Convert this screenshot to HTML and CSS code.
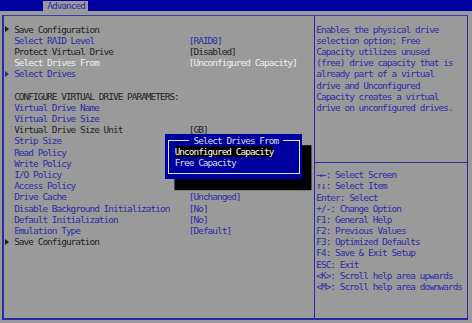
FILE: index.html
```html
<!DOCTYPE html>
<html>
<head>
<meta charset="utf-8">
<link rel="stylesheet" href="styles.css">
</head>
<body>
<div class="bar"><span class="tab">Advanced</span></div>
<div class="frame">
  <div class="main">
    <div class="row"><span class="mark"><i class="tri dark-tri"></i></span><span class="dark">Save Configuration</span><span></span></div>
    <div class="row"><span class="mark"></span><span class="blue">Select RAID Level</span><span class="blue">[RAID0]</span></div>
    <div class="row"><span class="mark"></span><span class="dark">Protect Virtual Drive</span><span class="dark">[Disabled]</span></div>
    <div class="row"><span class="mark"></span><span class="white">Select Drives From</span><span class="white">[Unconfigured Capacity]</span></div>
    <div class="row"><span class="mark"><i class="tri blue-tri"></i></span><span class="blue">Select Drives</span><span></span></div>
    <div class="row"><span class="mark"></span><span></span><span></span></div>
    <div class="row"><span class="mark"></span><span class="dark wide">CONFIGURE VIRTUAL DRIVE PARAMETERS:</span></div>
    <div class="row"><span class="mark"></span><span class="blue">Virtual Drive Name</span><span></span></div>
    <div class="row"><span class="mark"></span><span class="blue">Virtual Drive Size</span><span></span></div>
    <div class="row"><span class="mark"></span><span class="dark">Virtual Drive Size Unit</span><span class="dark">[GB]</span></div>
    <div class="row"><span class="mark"></span><span class="blue">Strip Size</span><span></span></div>
    <div class="row"><span class="mark"></span><span class="blue">Read Policy</span><span></span></div>
    <div class="row"><span class="mark"></span><span class="blue">Write Policy</span><span></span></div>
    <div class="row"><span class="mark"></span><span class="blue">I/O Policy</span><span></span></div>
    <div class="row"><span class="mark"></span><span class="blue">Access Policy</span><span></span></div>
    <div class="row"><span class="mark"></span><span class="blue">Drive Cache</span><span class="blue">[Unchanged]</span></div>
    <div class="row"><span class="mark"></span><span class="blue">Disable Background Initialization</span><span class="blue">[No]</span></div>
    <div class="row"><span class="mark"></span><span class="blue">Default Initialization</span><span class="blue">[No]</span></div>
    <div class="row"><span class="mark"></span><span class="blue">Emulation Type</span><span class="blue">[Default]</span></div>
    <div class="row"><span class="mark"><i class="tri dark-tri"></i></span><span class="dark">Save Configuration</span><span></span></div>
  </div>
  <div class="side">
    <div class="help">
      <div class="line">Enables the physical drive</div>
      <div class="line">selection option; Free</div>
      <div class="line">Capacity utilizes unused</div>
      <div class="line">(free) drive capacity that is</div>
      <div class="line">already part of a virtual</div>
      <div class="line">drive and Unconfigured</div>
      <div class="line">Capacity creates a virtual</div>
      <div class="line">drive on unconfigured drives.</div>
    </div>
    <div class="sep"></div>
    <div class="keys">
      <div class="line">→←: Select Screen</div>
      <div class="line">↑↓: Select Item</div>
      <div class="line">Enter: Select</div>
      <div class="line">+/-: Change Option</div>
      <div class="line">F1: General Help</div>
      <div class="line">F2: Previous Values</div>
      <div class="line">F3: Optimized Defaults</div>
      <div class="line">F4: Save &amp; Exit Setup</div>
      <div class="line">ESC: Exit</div>
      <div class="line">&lt;K&gt;: Scroll help area upwards</div>
      <div class="line">&lt;M&gt;: Scroll help area downwards</div>
    </div>
  </div>
</div>
<div class="popup">
  <div class="pframe">
    <span class="ptitle">Select Drives From</span>
    <div class="pitem"><span class="sel">Unconfigured Capacity</span></div>
    <div class="pitem">Free Capacity</div>
  </div>
</div>
</body>
</html>
```

FILE: styles.css
```css
html, body {
  margin: 0;
  padding: 0;
}
body {
  position: relative;
  width: 472px;
  height: 323px;
  overflow: hidden;
  background: #9a9a9a;
  font-family: "DejaVu Sans Mono", monospace;
  font-size: 9.4px;
  letter-spacing: -0.94px;
  line-height: 11.2px;
  white-space: nowrap;
}
.bar {
  height: 11.2px;
  background: #0000a0;
  display: flex;
  align-items: flex-end;
}
.tab {
  margin-left: 42.5px;
  height: 10.2px;
  line-height: 10.6px;
  padding: 0 3.4px 0 4.72px;
  background: #9a9a9a;
  color: #2c2ca8;
}
.frame {
  margin: 3.8px 0 0 2px;
  width: 466px;
  height: 305px;
  box-sizing: border-box;
  border-top: 1px solid #3a3aa8;
  border-left: 2px solid #2a2aa0;
  border-right: 1px solid #2a2aa0;
  border-bottom: 2px solid #2a2aa0;
  display: flex;
}
.main {
  width: 309.5px;
  flex: none;
  padding: 7.6px 0 0 0.72px;
  box-sizing: border-box;
}
.row {
  display: grid;
  grid-template-columns: 9.44px 174.64px auto;
  height: 11.2px;
}
.mark {
  display: flex;
  align-items: center;
  padding-left: 0.4px;
}
.tri {
  display: block;
  width: 0;
  height: 0;
  border-top: 3px solid transparent;
  border-bottom: 3px solid transparent;
  border-left: 4px solid #222;
}
.blue-tri { border-left-color: #2c2ca8; }
.dark-tri { border-left-color: #1e1e1e; }
.wide { grid-column: 2 / 4; }
.blue { color: #2c2ca8; }
.dark { color: #222222; }
.white { color: #eeeeee; }
.side {
  flex: 1;
  border-left: 1px solid #2a2aa0;
  padding: 7.6px 0 0 1.74px;
  color: #2c2ca8;
  display: flex;
  flex-direction: column;
}
.help {
  height: 134.4px;
  flex: none;
}
.line {
  height: 11.2px;
}
.sep {
  height: 0;
  flex: none;
  border-top: 1px solid #2a2aa0;
  margin: 4.4px 0 5.8px -1.74px;
}
.popup {
  position: absolute;
  left: 165.2px;
  top: 134.4px;
  width: 136.9px;
  height: 44.8px;
  box-sizing: border-box;
  padding: 5.6px 2.36px 5.1px 2.36px;
  background: #0000a0;
  box-shadow: 9.44px 11.2px 0 #000;
}
.pframe {
  position: relative;
  height: 100%;
  box-sizing: border-box;
  border: 1px solid #e4e4e4;
  padding: 5px 0 0 6.08px;
  color: #dcdcdc;
}
.ptitle {
  position: absolute;
  left: 20.2px;
  top: -6px;
  padding: 0 4.72px;
  background: #0000a0;
  color: #dcdcdc;
}
.pitem {
  height: 11.2px;
}
.sel {
  background: #000;
  color: #ffffff;
}
```
